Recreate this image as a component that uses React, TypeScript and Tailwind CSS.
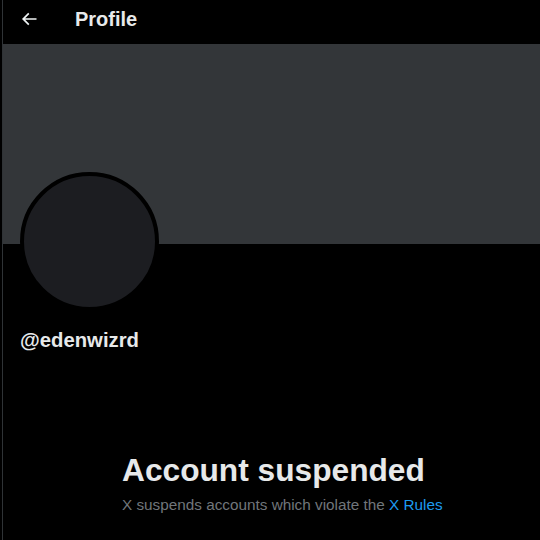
export default function App() {
  return (
    <div
      className="w-[540px] h-[540px] bg-black overflow-hidden flex"
      style={{ fontFamily: '"Liberation Sans", Arial, sans-serif' }}
    >
      {/* left column border */}
      <div className="w-[2px] shrink-0 bg-black" />
      <div className="w-px shrink-0 bg-[#2f3336]" />

      <main className="flex-1 flex flex-col text-[#e7e9ea]">
        {/* Header */}
        <header className="h-[44px] pb-[6px] flex items-center pl-[16px]">
          <svg viewBox="0 0 24 24" className="w-5 h-5 fill-[#eff3f4]">
            <path d="M7.414 13l5.043 5.043-1.414 1.414L3.586 12l7.457-7.457 1.414 1.414L7.414 11H21v2H7.414z" />
          </svg>
          <h1 className="ml-[36px] text-[20px] font-bold leading-6">Profile</h1>
        </header>

        {/* Banner */}
        <div className="h-[200px] bg-[#333639]" />

        {/* Avatar */}
        <div className="px-[17px] -mt-[72px]">
          <div className="w-[139px] h-[139px] rounded-full border-[4px] border-black bg-[#1c1d21]" />
        </div>

        {/* Username */}
        <div className="px-[17px] mt-[17px]">
          <span className="text-[20.3px] font-bold leading-6">@edenwizrd</span>
        </div>

        {/* Empty state */}
        <div className="pl-[119px] mt-[98px]">
          <h2 className="text-[31.7px] font-extrabold leading-9">Account suspended</h2>
          <p className="mt-[7px] text-[15.3px] leading-5 text-[#71767b] whitespace-nowrap">
            X suspends accounts which violate the{" "}
            <a className="text-[#1d9bf0]">X Rules</a>
          </p>
        </div>
      </main>
    </div>
  );
}
